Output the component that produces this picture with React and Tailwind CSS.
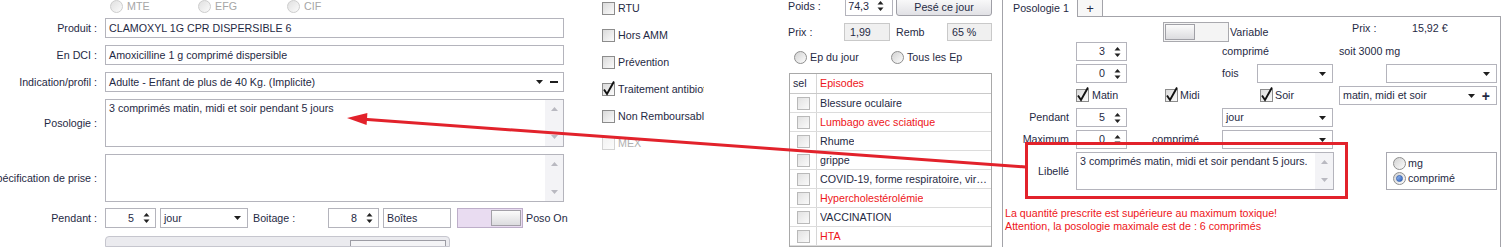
import React from 'react';

const red = 'text-[#ee1520]';

function SpinArrows() {
  return (
    <svg width="7" height="12" viewBox="0 0 7 12" className="shrink-0">
      <path d="M0.5 4.5 L3.5 1 L6.5 4.5 Z" fill="#222" />
      <path d="M0.5 7.5 L3.5 11 L6.5 7.5 Z" fill="#222" />
    </svg>
  );
}

function Caret() {
  return (
    <svg width="7" height="4" viewBox="0 0 7 4" className="shrink-0">
      <path d="M0 0 H7 L3.5 4 Z" fill="#1e1e1e" />
    </svg>
  );
}

function ScrollArrow({ up }) {
  return (
    <svg width="7" height="4" viewBox="0 0 7 4">
      <path d={up ? 'M0 4 H7 L3.5 0 Z' : 'M0 0 H7 L3.5 4 Z'} fill="#b9b9c1" />
    </svg>
  );
}

function Box({ className = '', children }) {
  return (
    <div className={`shrink-0 border border-[#b4b4bc] bg-white flex items-center pl-[3px] whitespace-nowrap overflow-hidden ${className}`}>
      {children}
    </div>
  );
}

function Spin({ value, className = '', wide }) {
  return (
    <div className={`shrink-0 border border-[#b4b4bc] bg-white flex items-center justify-end ${className}`}>
      <span className={wide ? 'pr-[8px]' : 'pr-[9px]'}>{value}</span>
      <span className={wide ? 'mr-[8px]' : 'mr-[5px]'}>
        <SpinArrows />
      </span>
    </div>
  );
}

function Select({ value = '', className = '', plus }) {
  return (
    <div className={`shrink-0 border border-[#b4b4bc] bg-white flex items-center justify-between pl-[3px] whitespace-nowrap ${className}`}>
      <span>{value}</span>
      <span className="flex items-center gap-[7px] mr-[6px]">
        <Caret />
        {plus && <span className="text-[14px] font-bold leading-[12px]">+</span>}
      </span>
    </div>
  );
}

function TextArea({ className = '', text }) {
  return (
    <div className={`shrink-0 flex border border-[#b4b4bc] bg-white ${className}`}>
      <div className="flex-1 pl-[3px] pt-[2px] whitespace-nowrap overflow-hidden">{text}</div>
      <div className="w-[18px] bg-[#f3f3f6] flex flex-col items-center justify-between py-[7px]">
        <ScrollArrow up />
        <ScrollArrow />
      </div>
    </div>
  );
}

function Checkbox({ checked, disabled, light }) {
  const cls = disabled
    ? 'border-[#d3d3d3] from-[#f2f2f2] to-[#fcfcfc]'
    : light
    ? 'border-[#b9b9b9] from-[#e2e2e2] to-[#fafafa]'
    : 'border-[#8c8c8c] from-[#dadada] to-[#fbfbfb]';
  return (
    <span className={`relative block w-[13px] h-[13px] shrink-0 border bg-linear-to-br ${cls}`}>
      {checked && (
        <svg className="absolute left-0 top-0 overflow-visible" width="11" height="11" viewBox="0 0 11 11">
          <path d="M1 5.5 L4 10 L11 -2.5" fill="none" stroke="#111" strokeWidth="1.9" />
        </svg>
      )}
    </span>
  );
}

function Radio({ checked, disabled }) {
  const cls = disabled
    ? 'border-[#cdcdcd] from-[#e0e0e0] to-[#fbfbfb]'
    : 'border-[#8e8e8e] from-[#d2d2d2] to-[#fdfdfd]';
  return (
    <span className={`flex items-center justify-center w-[13px] h-[13px] shrink-0 rounded-full border bg-linear-to-br ${cls}`}>
      {checked && <span className="w-[7px] h-[7px] rounded-full border border-[#3a66b3] bg-linear-to-br from-[#9cbcef] to-[#2f62c0]" />}
    </span>
  );
}

function FormRow({ label, className = '', children }) {
  return (
    <div className={`flex items-center ${className}`}>
      <div className="w-[97px] shrink-0 flex justify-end whitespace-nowrap">{label}</div>
      <div className="ml-[8px] flex items-center">{children}</div>
    </div>
  );
}

function LeftForm() {
  return (
    <div className="w-[600px] shrink-0 flex flex-col">
      <div className="h-[18px] flex items-center pl-[110px] text-[#a6a6a6]">
        <div className="w-[88px] flex items-center gap-[4px]"><Radio disabled />MTE</div>
        <div className="w-[89px] flex items-center gap-[4px]"><Radio disabled />EFG</div>
        <div className="flex items-center gap-[4px]"><Radio disabled />CIF</div>
      </div>
      <FormRow label="Produit :" className="mt-[5px]">
        <Box className="w-[459px] h-[20px]">CLAMOXYL 1G CPR DISPERSIBLE 6</Box>
      </FormRow>
      <FormRow label="En DCI :" className="mt-[7px]">
        <Box className="w-[459px] h-[20px]">Amoxicilline 1 g comprimé dispersible</Box>
      </FormRow>
      <FormRow label="Indication/profil :" className="mt-[7px]">
        <Box className="w-[459px] h-[20px] justify-between pr-[5px]">
          <span>Adulte - Enfant de plus de 40 Kg. (Implicite)</span>
          <span className="flex items-center gap-[7px]">
            <Caret />
            <span className="block w-[8px] h-[2px] bg-[#1e1e1e]" />
          </span>
        </Box>
      </FormRow>
      <FormRow label="Posologie :" className="mt-[7px]">
        <TextArea className="w-[459px] h-[48px]" text="3 comprimés matin, midi et soir pendant 5 jours" />
      </FormRow>
      <FormRow label="Spécification de prise :" className="mt-[7px]">
        <TextArea className="w-[459px] h-[48px]" text="" />
      </FormRow>
      <FormRow label="Pendant :" className="mt-[6px]">
        <Spin value="5" className="w-[51px] h-[20px]" />
        <Select value="jour" className="ml-[4px] w-[88px] h-[20px]" />
        <div className="ml-[5px] w-[75px] whitespace-nowrap">Boitage :</div>
        <Spin value="8" className="w-[51px] h-[20px]" />
        <Box className="ml-[4px] w-[68px] h-[20px]">Boîtes</Box>
        <div className="ml-[6px] w-[66px] h-[20px] shrink-0 border border-[#bdaec9] bg-[#e9dcf1] p-[1px] flex justify-end">
          <div className="w-[30px] h-full border border-[#a3a0a8] bg-linear-to-b from-[#fbfbfb] to-[#dcdcdf]" />
        </div>
        <span className="ml-[3px] whitespace-nowrap">Poso On</span>
      </FormRow>
      <div className="mt-[8px] ml-[105px] w-[345px] h-[14px] rounded-t-[4px] border border-[#c6c6ce] bg-[#ebebef] flex justify-end pr-[3px] pt-[3px]">
        <div className="w-[96px] h-full border-t border-l border-r border-[#9c9ca4] bg-[#f4f4f6]" />
      </div>
    </div>
  );
}

const flags = [
  ['RTU', false, false],
  ['Hors AMM', false, false],
  ['Prévention', false, false],
  ['Traitement antibiotique', true, false],
  ['Non Remboursable', false, false],
  ['MEX', false, true],
];

function Flags() {
  return (
    <div className="w-[188px] shrink-0 flex flex-col gap-[14px] pt-[2px] pl-[2px]">
      {flags.map(([label, checked, disabled]) => (
        <div key={label} className="h-[13px] flex items-center">
          <Checkbox checked={checked} disabled={disabled} />
          <span className={`ml-[3px] w-[86px] overflow-hidden whitespace-nowrap ${disabled ? 'text-[#b0b0b0]' : ''}`}>{label}</span>
        </div>
      ))}
    </div>
  );
}

const episodes = [
  ['Blessure oculaire', false],
  ['Lumbago avec sciatique', true],
  ['Rhume', false],
  ['grippe', false],
  ['COVID-19, forme respiratoire, virus identifié', false],
  ['Hypercholestérolémie', true],
  ['VACCINATION', false],
  ['HTA', true],
];

function Episodes() {
  return (
    <div className="w-[214px] shrink-0 flex flex-col">
      <div className="-mt-[4px] h-[20px] flex items-center">
        <span className="w-[57px] shrink-0">Poids :</span>
        <Spin value="74,3" wide className="w-[48px] h-[20px]" />
        <div className="ml-[3px] w-[96px] h-[20px] shrink-0 rounded-[3px] border border-[#9f9fa6] bg-linear-to-b from-[#fdfdfd] to-[#e1e1e5] flex items-center justify-center pt-[2px]">
          Pesé ce jour
        </div>
      </div>
      <div className="mt-[7px] h-[19px] flex items-center">
        <span className="w-[56px] shrink-0">Prix :</span>
        <div className="w-[46px] h-full shrink-0 border border-[#c9c9c9] bg-[#f0f0f0] flex items-center pl-[5px]">1,99</div>
        <span className="ml-[6px] w-[51px] shrink-0">Remb</span>
        <div className="w-[45px] h-full shrink-0 border border-[#c9c9c9] bg-[#f0f0f0] flex items-center pl-[4px]">65 %</div>
      </div>
      <div className="mt-[9px] h-[14px] flex items-center pl-[6px]">
        <div className="w-[97px] flex items-center gap-[3px]"><Radio />Ep du jour</div>
        <div className="flex items-center gap-[3px]"><Radio />Tous les Ep</div>
      </div>
      <div className="mt-[9px] ml-[1px] w-[203px] border border-[#a9a9a9] bg-white">
        <div className="flex h-[20px] border-b border-[#c9c9c9]">
          <div className="w-[27px] shrink-0 border-r border-[#d6d6d6] pl-[3px] flex items-center">sel</div>
          <div className={`pl-[3px] flex items-center ${red}`}>Episodes</div>
        </div>
        {episodes.map(([name, isRed]) => (
          <div key={name} className="flex h-[19px] border-b border-[#dcdcdc]">
            <div className="w-[27px] shrink-0 border-r border-[#d6d6d6] flex items-center justify-center">
              <Checkbox light />
            </div>
            <div className={`flex-1 min-w-0 pl-[3px] pr-[1px] flex items-center ${isRed ? red : ''}`}>
              <span className="truncate">{name}</span>
            </div>
          </div>
        ))}
      </div>
    </div>
  );
}

function PosologiePanel() {
  return (
    <div className="w-[502px] shrink-0 flex flex-col">
      <div className="-mt-[1px] h-[18px] w-[499px] flex shrink-0">
        <div className="w-[76px] border-l border-t border-r border-[#a3a3a9] bg-white pl-[10px] flex items-center">Posologie 1</div>
        <div className="w-[25px] border-t border-r border-b border-[#a3a3a9] bg-[#f7f7f7] flex items-center justify-center text-[13px]">+</div>
        <div className="flex-1 border-b border-[#a3a3a9]" />
      </div>
      <div className="w-[499px] flex-1 border-l border-r border-[#a3a3a9] flex flex-col">
        <div className="mt-[5px] h-[20px] flex items-center">
          <div className="ml-[160px] w-[66px] h-[20px] shrink-0 border border-[#a9a9ae] bg-[#f4f4f4] p-[1px] flex justify-start">
            <div className="w-[30px] h-full border border-[#a0a0a6] bg-linear-to-b from-[#fbfbfb] to-[#dcdcdf]" />
          </div>
          <span className="ml-[1px] w-[122px] shrink-0">Variable</span>
          <span className="w-[60px] shrink-0 self-start">Prix :</span>
          <span className="self-start">15,92 €</span>
        </div>
        <div className="h-[19px] flex items-center">
          <Spin value="3" className="ml-[73px] w-[51px] h-[19px]" />
          <span className="ml-[95px] w-[117px] shrink-0">comprimé</span>
          <span>soit 3000 mg</span>
        </div>
        <div className="mt-[3px] h-[19px] flex items-center">
          <Spin value="0" className="ml-[73px] w-[51px] h-[19px]" />
          <span className="ml-[95px] w-[35px] shrink-0">fois</span>
          <Select className="w-[76px] h-[19px]" />
          <Select className="ml-[53px] w-[111px] h-[19px]" />
        </div>
        <div className="mt-[3px] h-[19px] flex items-center">
          <div className="ml-[73px] w-[89px] shrink-0 flex items-center gap-[3px]"><Checkbox checked />Matin</div>
          <div className="w-[95px] shrink-0 flex items-center gap-[2px]"><Checkbox checked />Midi</div>
          <div className="w-[79px] shrink-0 flex items-center gap-[2px]"><Checkbox checked />Soir</div>
          <Select value="matin, midi et soir" plus className="w-[158px] h-[19px]" />
        </div>
        <div className="mt-[3px] h-[19px] flex items-center">
          <span className="w-[66px] shrink-0 text-right">Pendant</span>
          <Spin value="5" className="ml-[7px] w-[51px] h-[19px]" />
          <Select value="jour" className="ml-[95px] w-[111px] h-[19px]" />
        </div>
        <div className="mt-[3px] h-[19px] flex items-center">
          <span className="w-[66px] shrink-0 text-right">Maximum</span>
          <Spin value="0" className="ml-[7px] w-[51px] h-[19px]" />
          <span className="ml-[25px] w-[70px] shrink-0">comprimé</span>
          <Select className="w-[111px] h-[19px]" />
        </div>
        <div className="mt-[3px] h-[38px] flex items-center">
          <span className="w-[66px] shrink-0 text-right">Libellé</span>
          <TextArea className="ml-[7px] w-[258px] h-[38px]" text="3 comprimés matin, midi et soir pendant 5 jours." />
          <div className="ml-[52px] w-[111px] h-[38px] shrink-0 border border-[#a9a9b1] flex flex-col pl-[6px] pt-[3px] gap-[1px]">
            <div className="h-[14px] flex items-center gap-[2px]"><Radio />mg</div>
            <div className="h-[14px] flex items-center gap-[2px]"><Radio checked />comprimé</div>
          </div>
        </div>
        <div className={`mt-[17px] pl-[2px] whitespace-nowrap ${red}`}>
          <div>La quantité prescrite est supérieure au maximum toxique!</div>
          <div>Attention, la posologie maximale est de : 6 comprimés</div>
        </div>
      </div>
    </div>
  );
}

function Annotations() {
  return (
    <svg className="absolute left-0 top-0 pointer-events-none" width="1504" height="247">
      <line x1="1026" y1="167" x2="364" y2="119.3" stroke="#e2222b" strokeWidth="3" />
      <polygon points="347,118 367.4,113 366.6,125" fill="#e2222b" />
      <rect x="1026.5" y="143.5" width="320" height="54" fill="none" stroke="#e2222b" strokeWidth="3" />
    </svg>
  );
}

export default function App() {
  return (
    <div className="relative w-[1504px] h-[247px] overflow-hidden bg-white font-['Liberation_Sans',Arial,sans-serif] text-[10.7px] leading-[13px] text-[#1f2a44]">
      <div className="flex h-full">
        <LeftForm />
        <Flags />
        <Episodes />
        <PosologiePanel />
      </div>
      <Annotations />
    </div>
  );
}
